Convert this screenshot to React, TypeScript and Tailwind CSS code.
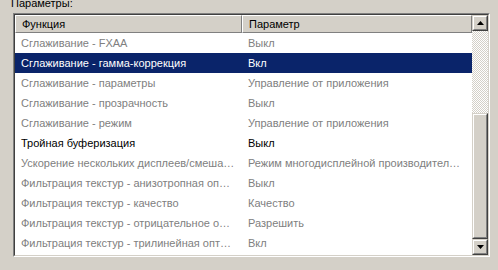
import { ReactNode } from 'react';

type Row = {
  fn: string;
  value: string;
  state: 'off' | 'on' | 'selected';
};

const rows: Row[] = [
  { fn: 'Сглаживание - FXAA', value: 'Выкл', state: 'off' },
  { fn: 'Сглаживание - гамма-коррекция', value: 'Вкл', state: 'selected' },
  { fn: 'Сглаживание - параметры', value: 'Управление от приложения', state: 'off' },
  { fn: 'Сглаживание - прозрачность', value: 'Выкл', state: 'off' },
  { fn: 'Сглаживание - режим', value: 'Управление от приложения', state: 'off' },
  { fn: 'Тройная буферизация', value: 'Выкл', state: 'on' },
  { fn: 'Ускорение нескольких дисплеев/смеша…', value: 'Режим многодисплейной производител…', state: 'off' },
  { fn: 'Фильтрация текстур - анизотропная оп…', value: 'Выкл', state: 'off' },
  { fn: 'Фильтрация текстур - качество', value: 'Качество', state: 'off' },
  { fn: 'Фильтрация текстур - отрицательное о…', value: 'Разрешить', state: 'off' },
  { fn: 'Фильтрация текстур - трилинейная опт…', value: 'Вкл', state: 'off' },
];

function HeaderCell({ children, className }: { children: ReactNode; className: string }) {
  return (
    <div
      className={`h-[18px] flex items-center pl-[6px] bg-[#d4d0c8] border-t border-l border-t-white border-l-white border-r border-b border-r-[#808080] border-b-[#808080] text-black ${className}`}
    >
      {children}
    </div>
  );
}

function ScrollButton({ up }: { up: boolean }) {
  return (
    <div className="h-4 w-4 bg-[#d4d0c8] border border-t-[#d4d0c8] border-l-[#d4d0c8] border-r-[#404040] border-b-[#404040]">
      <div className="h-full w-full border border-t-white border-l-white border-r-[#808080] border-b-[#808080] flex items-center justify-center">
        <svg width="7" height="4" viewBox="0 0 7 4">
          {up ? <path d="M3.5 0 L7 4 L0 4 Z" fill="#000" /> : <path d="M0 0 L7 0 L3.5 4 Z" fill="#000" />}
        </svg>
      </div>
    </div>
  );
}

export default function App() {
  return (
    <div className="w-[498px] h-[270px] bg-[#d4d0c8] overflow-hidden text-[11px] leading-none" style={{ fontFamily: '"Liberation Sans", Arial, sans-serif' }}>
      <div className="pl-[11px] h-[13px] flex items-end pb-[4px] text-black">
        <span className="leading-none">Параметры:</span>
      </div>

      <div className="ml-[13px] w-[477px] h-[244px] border border-t-[#808080] border-l-[#808080] border-r-white border-b-white">
        <div className="h-full w-full border border-t-[#404040] border-l-[#404040] border-r-[#d4d0c8] border-b-[#d4d0c8] bg-white flex">
          <div className="flex-1 overflow-hidden">
            <div className="flex">
              <HeaderCell className="w-[227px]">Функция</HeaderCell>
              <HeaderCell className="flex-1">Параметр</HeaderCell>
            </div>
            {rows.map((row) => (
              <div
                key={row.fn}
                className={`flex h-5 items-center ${
                  row.state === 'selected'
                    ? 'bg-[#0a246a] text-white'
                    : row.state === 'on'
                    ? 'text-black'
                    : 'text-[#808080]'
                }`}
              >
                <div className="w-[227px] pl-[6px] whitespace-nowrap overflow-hidden">{row.fn}</div>
                <div className="flex-1 pl-[6px] whitespace-nowrap overflow-hidden">{row.value}</div>
              </div>
            ))}
          </div>

          <div className="w-4 flex flex-col">
            <ScrollButton up />
            <div className="h-[82px] bg-[repeating-conic-gradient(#d4d0c8_0_25%,#ffffff_0_50%)] bg-[length:2px_2px]" />
            <div className="flex-1 bg-[#d4d0c8] border border-t-[#d4d0c8] border-l-[#d4d0c8] border-r-[#404040] border-b-[#404040]">
              <div className="h-full w-full border border-t-white border-l-white border-r-[#808080] border-b-[#808080]" />
            </div>
            <ScrollButton up={false} />
          </div>
        </div>
      </div>
    </div>
  );
}
